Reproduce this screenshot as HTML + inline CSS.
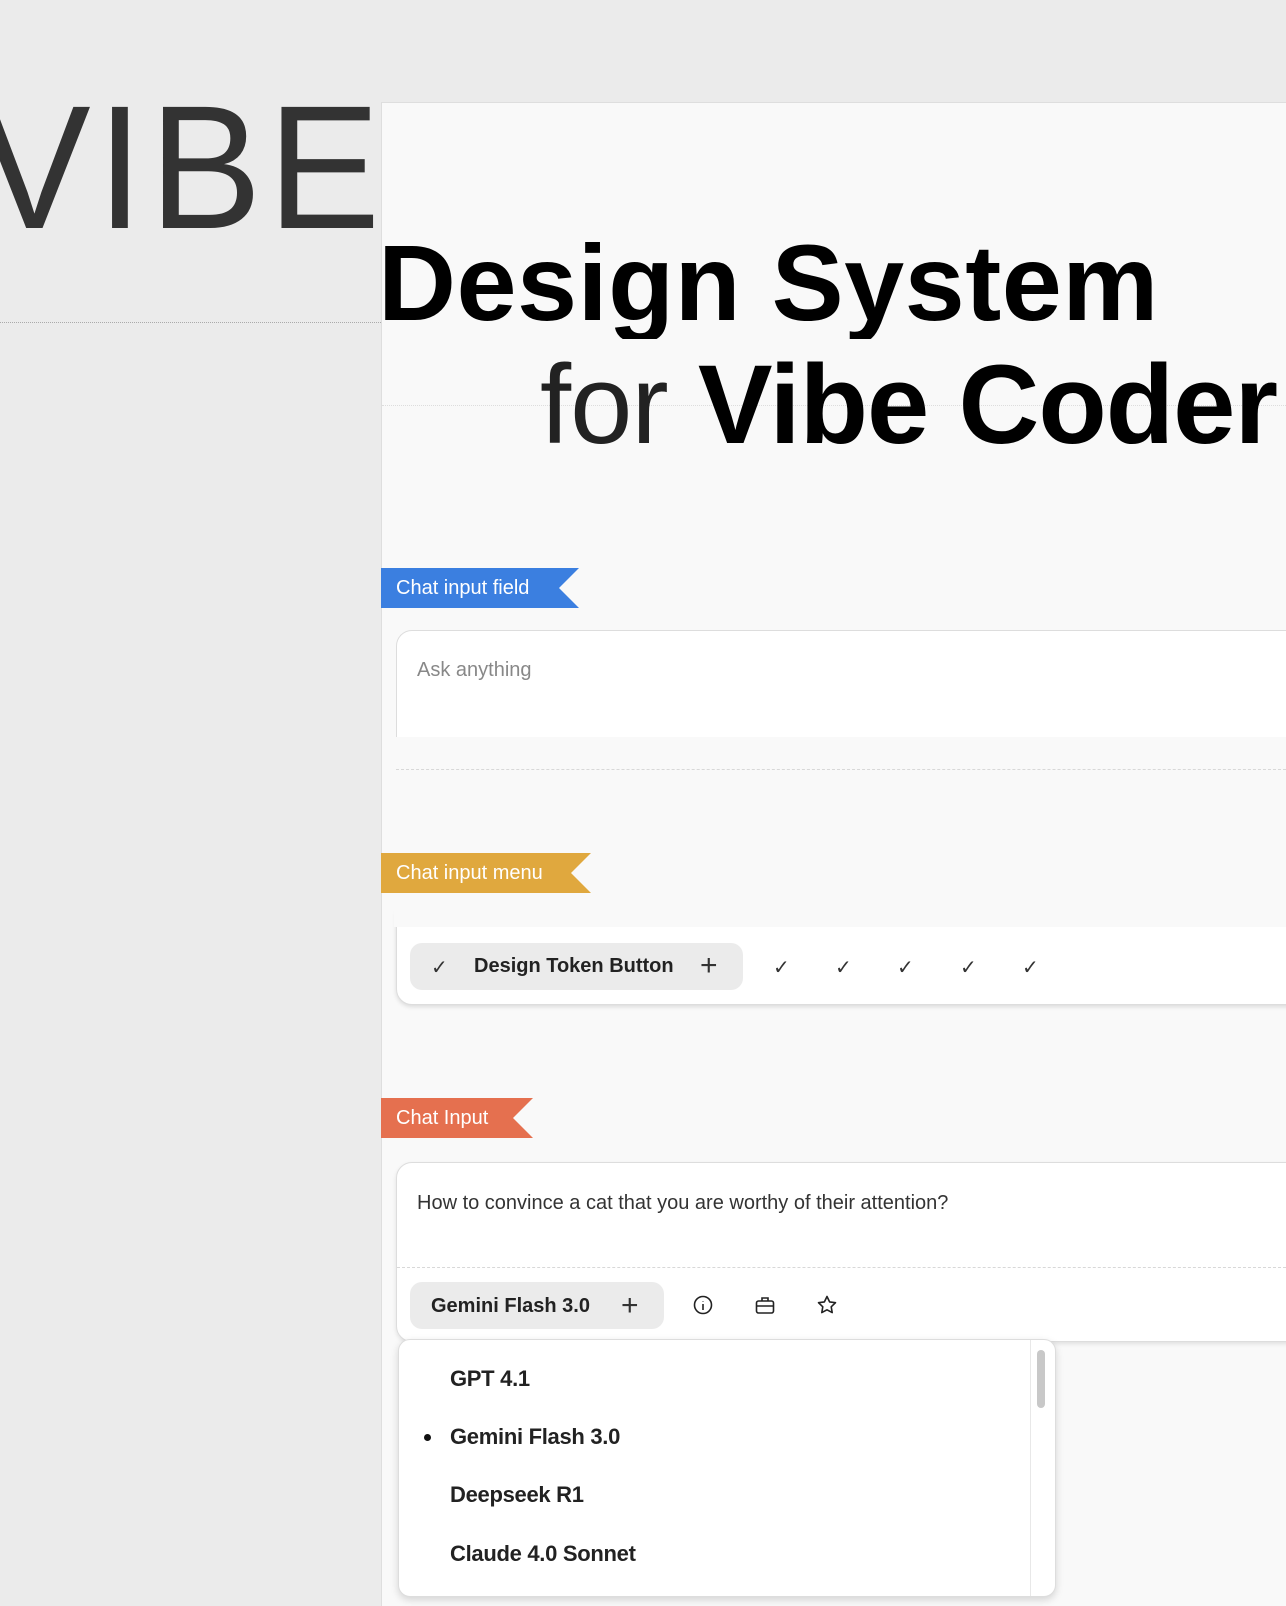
<!DOCTYPE html>
<html><head><meta charset="utf-8"><style>
*{margin:0;padding:0;box-sizing:border-box}
body{width:1286px;height:1606px;background:#ebebeb;position:relative;overflow:hidden;font-family:"Liberation Sans",sans-serif}
.a{position:absolute}
.panel{left:381px;top:102px;width:905px;height:1504px;background:#f9f9f9;border-left:1px solid #dedede;border-top:1px solid #dedede}
.vibe{left:-22px;top:80px;font-size:176px;line-height:1;color:#333;font-weight:normal;letter-spacing:6px;transform:scaleX(0.96);transform-origin:left top}
.dot1{left:0;top:322px;width:381px;border-top:1px dotted #aaa}
.dot2{left:382px;top:405px;width:904px;border-top:1px dotted #ddd}
.t1{left:378px;top:229px;font-size:108px;font-weight:bold;color:#000;line-height:1;letter-spacing:0.5px;height:110px;overflow:hidden;white-space:nowrap}
.t2{left:540px;top:349px;font-size:112px;color:#000;line-height:1;height:99px;overflow:hidden;white-space:nowrap;letter-spacing:-1px}
.t2 b{font-weight:bold}
.tag{height:40px;color:#fff;font-size:20px;line-height:40px;padding-left:15px}
.tag::after{content:"";position:absolute;right:0;top:0;border-right:20px solid #f9f9f9;border-top:20px solid transparent;border-bottom:20px solid transparent}
.box{background:#fff;border:1.5px solid #ddd;border-radius:16px}
.chip{background:#ebebeb;border-radius:12px;font-size:20px;color:#222;font-weight:bold}
.ck{font-size:20px;color:#333}
.it{left:450px;font-size:22px;color:#222;font-weight:bold;letter-spacing:-0.3px}
</style></head><body>
<div class="a vibe">VIBE</div>
<div class="a dot1"></div>
<div class="a panel"></div>
<div class="a dot2"></div>
<div class="a t1">Design System</div>
<div class="a t2"><span style="font-weight:normal;color:#222">for</span> <b>Vibe Coder</b></div>

<div class="a tag" style="left:381px;top:568px;width:198px;background:#3b7fe0">Chat input field</div>
<div class="a box" style="left:396px;top:630px;width:910px;height:140px"></div>
<div class="a" style="left:396px;top:737px;width:890px;height:40px;background:#f9f9f9"></div>
<div class="a" style="left:396px;top:769px;width:890px;border-top:1px dashed #d8d8d8"></div>
<div class="a" style="left:417px;top:659px;font-size:20px;color:#888">Ask anything</div>

<div class="a tag" style="left:381px;top:853px;width:210px;background:#e0a83e">Chat input menu</div>
<div class="a box" style="left:396px;top:900px;width:910px;height:105px;box-shadow:0 2px 4px rgba(0,0,0,.12)"></div>
<div class="a" style="left:394px;top:898px;width:892px;height:29px;background:#f9f9f9"></div>
<div class="a chip" style="left:410px;top:943px;width:333px;height:47px"></div>
<div class="a ck" style="left:431px;top:955px">✓</div>
<div class="a" style="left:474px;top:955px;font-size:20px;font-weight:bold;color:#222">Design Token Button</div>
<div class="a" style="left:700px;top:951px;font-size:30px;color:#333;line-height:1">+</div>
<div class="a ck" style="left:773px;top:955px">✓</div>
<div class="a ck" style="left:835px;top:955px">✓</div>
<div class="a ck" style="left:897px;top:955px">✓</div>
<div class="a ck" style="left:960px;top:955px">✓</div>
<div class="a ck" style="left:1022px;top:955px">✓</div>

<div class="a tag" style="left:381px;top:1098px;width:152px;background:#e5704f">Chat Input</div>
<div class="a box" style="left:396px;top:1162px;width:910px;height:180px;box-shadow:0 2px 4px rgba(0,0,0,.1)"></div>
<div class="a" style="left:417px;top:1192px;font-size:20px;color:#333">How to convince a cat that you are worthy of their attention?</div>
<div class="a" style="left:397px;top:1267px;width:889px;border-top:1px dashed #d8d8d8"></div>
<div class="a chip" style="left:410px;top:1282px;width:254px;height:47px"></div>
<div class="a" style="left:431px;top:1295px;font-size:20px;font-weight:bold;color:#222">Gemini Flash 3.0</div>
<div class="a" style="left:621px;top:1291px;font-size:30px;color:#333;line-height:1">+</div>
<svg class="a" style="left:692px;top:1294px" width="22" height="22" viewBox="0 0 22 22" fill="none" stroke="#222" stroke-width="1.6"><circle cx="11" cy="11" r="8.5"/><path d="M11 10v6M11 7v.5"/></svg>
<svg class="a" style="left:754px;top:1294px" width="22" height="22" viewBox="0 0 22 22" fill="none" stroke="#222" stroke-width="1.6"><rect x="2.5" y="7" width="17" height="12" rx="2"/><path d="M8 7V4h6v3M2.5 12h17"/></svg>
<svg class="a" style="left:816px;top:1294px" width="22" height="22" viewBox="0 0 22 22" fill="none" stroke="#222" stroke-width="1.6" stroke-linejoin="round"><path d="M11 2.5l2.6 5.4 5.9.8-4.3 4.1 1 5.8L11 15.8l-5.2 2.8 1-5.8-4.3-4.1 5.9-.8z"/></svg>

<div class="a box" style="left:398px;top:1339px;width:658px;height:258px;border-radius:12px;box-shadow:0 3px 8px rgba(0,0,0,.15)"></div>
<div class="a" style="left:1030px;top:1340px;width:1px;height:256px;background:#e8e8e8"></div>
<div class="a" style="left:1037px;top:1350px;width:8px;height:58px;background:#c8c8c8;border-radius:4px"></div>
<div class="a it" style="top:1366px">GPT 4.1</div>
<div class="a" style="left:424px;top:1434px;width:7px;height:7px;border-radius:50%;background:#111"></div>
<div class="a it" style="top:1424px">Gemini Flash 3.0</div>
<div class="a it" style="top:1482px">Deepseek R1</div>
<div class="a it" style="top:1541px">Claude 4.0 Sonnet</div>
</body></html>
